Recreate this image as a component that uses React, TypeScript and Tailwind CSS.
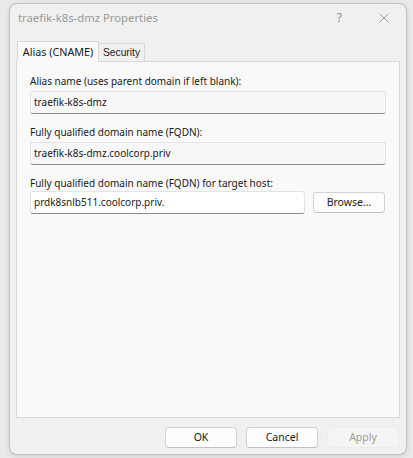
import React from "react";

const font = { fontFamily: '"Noto Sans", "Open Sans", sans-serif' };

const Field = ({ value, readOnly = false, width = "w-[356px]" }: { value: string; readOnly?: boolean; width?: string }) => (
  <div
    className={`${width} h-[23px] flex items-center pl-[3px] text-[10px] text-[#1a1a1a] rounded-[3px] border border-[#e3e3e3] border-b-[#8c8c8c] ${
      readOnly ? "bg-[#f7f7f7]" : "bg-white"
    }`}
  >
    {value}
  </div>
);

const Button = ({ label, disabled = false, className = "" }: { label: string; disabled?: boolean; className?: string }) => (
  <button
    className={`w-[72px] h-[21px] text-[10.5px] rounded-[4px] border flex items-center justify-center ${
      disabled
        ? "bg-[#f4f4f4] border-[#ececec] text-[#9d9d9d]"
        : "bg-[#fdfdfd] border-[#d3d3d3] border-b-[#c0c0c0] text-[#1a1a1a]"
    } ${className}`}
  >
    {label}
  </button>
);

export default function App() {
  return (
    <div className="w-[413px] h-[458px] bg-[#eaeaea] pl-[9px] pt-[3px]" style={font}>
      <div className="w-[398px] h-[452px] rounded-[8px] border border-[#c4c4c4] bg-[#f0f0f0] shadow-[0_1px_4px_rgba(0,0,0,0.15)] flex flex-col">
        {/* title bar */}
        <div className="h-[28px] flex items-center pl-[8px] text-[11.3px] text-[#9a9a9a]">
          <span>traefik-k8s-dmz Properties</span>
          <span className="ml-auto mr-[37px] text-[12px] text-[#8f8f8f]">?</span>
          <svg width="10" height="10" viewBox="0 0 10 10" className="mr-[17px]">
            <path d="M0.5 0.5 L9.5 9.5 M9.5 0.5 L0.5 9.5" stroke="#8f8f8f" strokeWidth="0.9" />
          </svg>
        </div>

        {/* tabs */}
        <div className="mt-[9px] ml-[7px] flex items-end h-[20px] relative z-10 text-[10.75px] text-[#1a1a1a]">
          <div className="w-[82px] h-[21px] -mb-[1px] bg-[#f9f9f9] border border-[#d9d9d9] border-b-0 flex items-center justify-center">
            Alias (CNAME)
          </div>
          <div className="w-[46px] h-[18px] bg-[#f0f0f0] border border-l-0 border-[#d9d9d9] border-b-0 flex items-center justify-center text-[10.3px]" style={{ fontFamily: '"Liberation Sans", Arial, sans-serif' }}>
            Security
          </div>
        </div>

        {/* panel */}
        <div className="ml-[6px] w-[384px] h-[357px] bg-[#f9f9f9] border border-[#d9d9d9] pl-[13px] pt-[11px] text-[10px] text-[#1a1a1a]">
          <div className="h-[16px] leading-[16px]">Alias name (uses parent domain if left blank):</div>
          <div className="mt-[2px]">
            <Field value="traefik-k8s-dmz" readOnly />
          </div>
          <div className="mt-[10px] h-[16px] leading-[16px]">Fully qualified domain name (FQDN):</div>
          <div className="mt-[2px]">
            <Field value="traefik-k8s-dmz.coolcorp.priv" readOnly />
          </div>
          <div className="mt-[10px] h-[16px] leading-[16px]">Fully qualified domain name (FQDN) for target host:</div>
          <div className="flex items-center">
            <Field value="prdk8snlb511.coolcorp.priv." width="w-[275px]" />
            <Button label="Browse..." className="ml-[8px]" />
          </div>
        </div>

        {/* footer */}
        <div className="flex justify-end mt-[9px] mr-[7px] gap-[9px]">
          <Button label="OK" />
          <Button label="Cancel" />
          <Button label="Apply" disabled />
        </div>
      </div>
    </div>
  );
}
